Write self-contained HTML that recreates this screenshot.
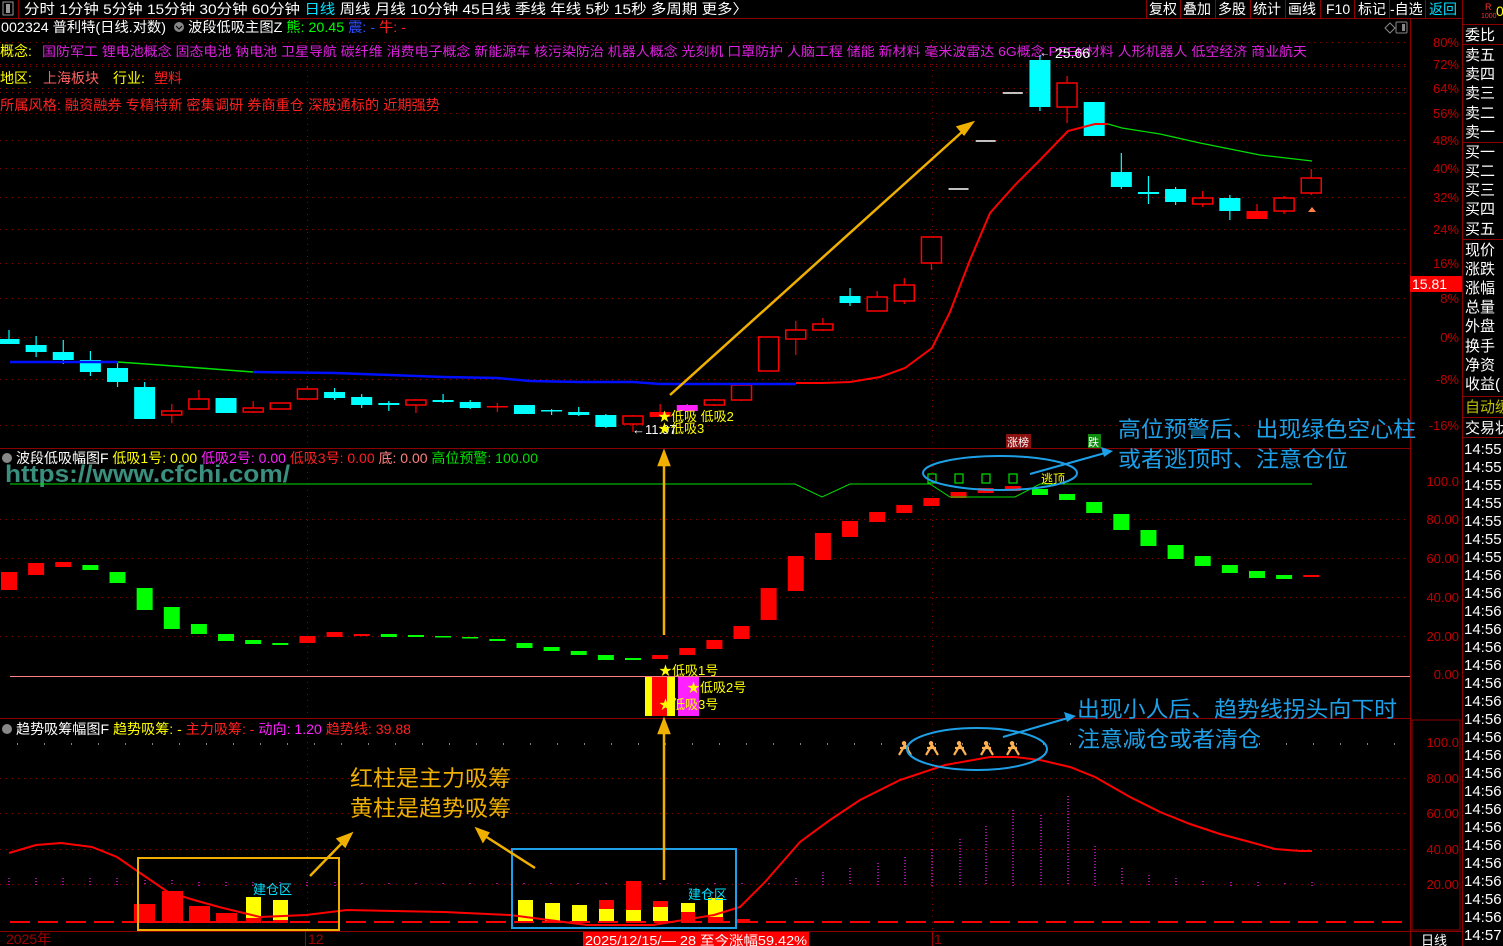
<!DOCTYPE html>
<html><head><meta charset="utf-8"><style>
html,body{margin:0;padding:0;background:#000;width:1503px;height:946px;overflow:hidden}
svg{display:block;font-family:"Liberation Sans","Noto Sans CJK SC",sans-serif}
</style></head><body>
<svg id="s" width="1503" height="946" viewBox="0 0 1503 946" xmlns="http://www.w3.org/2000/svg">
<rect width="1503" height="946" fill="#000"/>
<!-- toolbar -->
<line x1="0" y1="18.5" x2="1462" y2="18.5" stroke="#8b0000"/>
<rect x="3" y="2" width="10" height="13" fill="none" stroke="#999"/><rect x="6" y="4" width="4" height="9" fill="#999"/>
<line x1="18.5" y1="0" x2="18.5" y2="18" stroke="#8b0000"/>
<g font-size="14" fill="#fff">
<text x="24" y="14" textLength="724" lengthAdjust="spacingAndGlyphs">分时 1分钟 5分钟 15分钟 30分钟 60分钟 <tspan fill="#00e0ff">日线</tspan> 周线 月线 10分钟 45日线 季线 年线 5秒 15秒 多周期 更多〉</text>
<text x="1149" y="14">复权</text><text x="1183" y="14">叠加</text><text x="1218" y="14">多股</text><text x="1253" y="14">统计</text><text x="1288" y="14">画线</text><text x="1326" y="14">F10</text><text x="1358" y="14">标记</text><text x="1390" y="14">-自选</text><text x="1429" y="14" fill="#00e0ff">返回</text>
</g>
<g stroke="#8b0000"><line x1="1146.5" y1="0" x2="1146.5" y2="18"/><line x1="1180.5" y1="0" x2="1180.5" y2="18"/><line x1="1215.5" y1="0" x2="1215.5" y2="18"/><line x1="1250.5" y1="0" x2="1250.5" y2="18"/><line x1="1285.5" y1="0" x2="1285.5" y2="18"/><line x1="1320.5" y1="0" x2="1320.5" y2="18"/><line x1="1354.5" y1="0" x2="1354.5" y2="18"/><line x1="1389.5" y1="0" x2="1389.5" y2="18"/><line x1="1425.5" y1="0" x2="1425.5" y2="18"/></g>
<!-- frame lines -->
<g stroke="#8b0000" stroke-width="1">
<line x1="1410.5" y1="19" x2="1410.5" y2="946"/>
<line x1="1462.5" y1="0" x2="1462.5" y2="946"/>
<line x1="0" y1="448.5" x2="1410" y2="448.5"/>
<line x1="0" y1="718.5" x2="1410" y2="718.5"/>
<line x1="0" y1="931.5" x2="1462" y2="931.5"/>
</g>
<!-- header texts -->
<text x="1" y="32" font-size="14" fill="#fff" textLength="165" lengthAdjust="spacingAndGlyphs">002324 普利特(日线.对数)</text>
<circle cx="179" cy="27" r="5" fill="#888"/><path d="M176 26l3 3 3-3" stroke="#000" fill="none"/>
<text x="188" y="32" font-size="14" fill="#fff" textLength="218" lengthAdjust="spacingAndGlyphs">波段低吸主图Z <tspan fill="#00ff00">熊: 20.45</tspan> <tspan fill="#3050ff">震: -</tspan> <tspan fill="#ff2020">牛: -</tspan></text>
<text x="0" y="56" font-size="14" fill="#ffff00">概念:</text>
<text x="42" y="56" font-size="13" fill="#e020e0" textLength="1265" lengthAdjust="spacingAndGlyphs">国防军工 锂电池概念 固态电池 钠电池 卫星导航 碳纤维 消费电子概念 新能源车 核污染防治 机器人概念 光刻机 口罩防护 人脑工程 储能 新材料 毫米波雷达 6G概念 PEEK材料 人形机器人 低空经济 商业航天</text>
<text x="0" y="83" font-size="14" fill="#ffff00">地区:</text>
<text x="43" y="83" font-size="14" fill="#ff6060">上海板块</text>
<text x="113" y="83" font-size="14" fill="#ffff00">行业:</text>
<text x="154" y="83" font-size="14" fill="#ff2020">塑料</text>
<text x="0" y="110" font-size="14" fill="#ff2020" textLength="440" lengthAdjust="spacingAndGlyphs">所属风格: 融资融券 专精特新 密集调研 券商重仓 深股通标的 近期强势</text>
<path d="M1385 28l5-5 5 5-5 5z" fill="none" stroke="#888"/><rect x="1396" y="22" width="11" height="11" fill="none" stroke="#888" rx="1"/><rect x="1402" y="24" width="3" height="7" fill="#888"/>
<g id="grid" stroke="#8b0000" stroke-dasharray="1 5"></g>
<!-- price axis -->
<g font-size="13" fill="#c00000" text-anchor="end">
<text x="1459" y="47">80%</text><text x="1459" y="69">72%</text><text x="1459" y="93">64%</text><text x="1459" y="118">56%</text><text x="1459" y="145">48%</text><text x="1459" y="173">40%</text><text x="1459" y="202">32%</text><text x="1459" y="234">24%</text><text x="1459" y="268">16%</text><text x="1459" y="303">8%</text><text x="1459" y="342">0%</text><text x="1459" y="384">-8%</text><text x="1459" y="430">-16%</text>
<text x="1459" y="486">100.0</text><text x="1459" y="524">80.00</text><text x="1459" y="563">60.00</text><text x="1459" y="602">40.00</text><text x="1459" y="641">20.00</text><text x="1459" y="679">0.00</text>
<text x="1459" y="747">100.0</text><text x="1459" y="783">80.00</text><text x="1459" y="818">60.00</text><text x="1459" y="854">40.00</text><text x="1459" y="889">20.00</text>
</g>
<rect x="1410" y="276" width="52" height="16" fill="#ff0000"/>
<text x="1412" y="289" font-size="14" fill="#fff">15.81</text>
<rect x="1412" y="720" width="48" height="210" fill="none" stroke="#8b0000"/>
<!-- right panel -->
<g font-size="15" fill="#fff">
<text x="1465" y="40">委比</text>
<text x="1465" y="60">卖五</text><text x="1465" y="79">卖四</text><text x="1465" y="98">卖三</text><text x="1465" y="118">卖二</text><text x="1465" y="137">卖一</text>
<text x="1465" y="157">买一</text><text x="1465" y="176">买二</text><text x="1465" y="195">买三</text><text x="1465" y="214">买四</text><text x="1465" y="234">买五</text>
<text x="1465" y="255">现价</text><text x="1465" y="274">涨跌</text><text x="1465" y="293">涨幅</text><text x="1465" y="312">总量</text><text x="1465" y="331">外盘</text><text x="1465" y="351">换手</text><text x="1465" y="370">净资</text><text x="1465" y="389">收益(</text>
<text x="1465" y="412" fill="#c0c000">自动缓</text>
<text x="1465" y="433">交易状</text>
</g>
<g stroke="#8b0000"><line x1="1463" y1="24.5" x2="1503" y2="24.5"/><line x1="1463" y1="44.5" x2="1503" y2="44.5"/><line x1="1463" y1="142.5" x2="1503" y2="142.5"/><line x1="1463" y1="239.5" x2="1503" y2="239.5"/><line x1="1463" y1="396.5" x2="1503" y2="396.5"/><line x1="1463" y1="417.5" x2="1503" y2="417.5"/><line x1="1463" y1="437.5" x2="1503" y2="437.5"/></g>
<text x="1485" y="10" font-size="9" fill="#ff3030">R</text><text x="1481" y="18" font-size="7" fill="#ff3030">1000</text><text x="1496" y="16" font-size="14" fill="#ffff00">0</text>
<g id="times" font-size="15" fill="#fff">
<text x="1464" y="454">14:55</text><text x="1464" y="472">14:55</text><text x="1464" y="490">14:55</text><text x="1464" y="508">14:55</text><text x="1464" y="526">14:55</text><text x="1464" y="544">14:55</text><text x="1464" y="562">14:55</text><text x="1464" y="580">14:56</text><text x="1464" y="598">14:56</text><text x="1464" y="616">14:56</text><text x="1464" y="634">14:56</text><text x="1464" y="652">14:56</text><text x="1464" y="670">14:56</text><text x="1464" y="688">14:56</text><text x="1464" y="706">14:56</text><text x="1464" y="724">14:56</text><text x="1464" y="742">14:56</text><text x="1464" y="760">14:56</text><text x="1464" y="778">14:56</text><text x="1464" y="796">14:56</text><text x="1464" y="814">14:56</text><text x="1464" y="832">14:56</text><text x="1464" y="850">14:56</text><text x="1464" y="868">14:56</text><text x="1464" y="886">14:56</text><text x="1464" y="904">14:56</text><text x="1464" y="922">14:56</text><text x="1464" y="940">14:57</text>
</g>
<g id="shapes"></g>
<!-- main lines -->
<polyline points="10,362 118,362" stroke="#0010ff" stroke-width="2.5" fill="none"/>
<polyline points="118,362 160,365 200,368 253,372" stroke="#00e000" stroke-width="1.5" fill="none"/>
<polyline points="253,372 335,373 390,375 443,377 497,378 530,381 580,382 633,382 660,384 796,384" stroke="#0010ff" stroke-width="2.5" fill="none"/>
<polyline points="796,383 823,383 850,382 880,377 905,368 932,348 950,312 970,260 990,213 1015,185 1040,160 1068,131 1095,124 1108,124" stroke="#ff0000" stroke-width="2" fill="none"/>
<polyline points="1108,124 1122,128 1160,134 1200,143 1260,155 1312,161" stroke="#00e000" stroke-width="1.2" fill="none"/>
<text x="1055" y="58" font-size="14" fill="#fff">25.66</text><text x="1040" y="56" font-size="10" fill="#fff">←</text>
<path d="M1308 212l4-5 4 5z" fill="#ff8040"/>
<text x="632" y="434" font-size="13" fill="#fff">←11.97</text>
<text x="658" y="421" font-size="13" fill="#ffff00">★低吸  低吸2</text>
<text x="658" y="433" font-size="13" fill="#ffff00">★低吸3</text>
<!-- panel 2 -->
<text x="16" y="463" font-size="14" fill="#fff" textLength="522" lengthAdjust="spacingAndGlyphs">波段低吸幅图F <tspan fill="#ffff00">低吸1号: 0.00</tspan> <tspan fill="#ff20ff">低吸2号: 0.00</tspan> <tspan fill="#ff2020">低吸3号: 0.00</tspan> <tspan fill="#ff8080">底: 0.00</tspan> <tspan fill="#00e000">高位预警: 100.00</tspan></text>
<circle cx="7" cy="458" r="5" fill="#888"/>
<text x="5" y="482" font-size="24" font-weight="bold" fill="#3a8f7f" textLength="285" lengthAdjust="spacingAndGlyphs">https://www.cfchi.com/</text>
<polyline points="10,484 795,484 822,497 850,484 930,484 950,497 1015,497 1040,484 1312,484" stroke="#00e000" stroke-width="1" fill="none"/>
<line x1="10" y1="676.5" x2="1410" y2="676.5" stroke="#ff8080" stroke-width="1"/>
<rect x="645" y="677" width="7" height="39" fill="#ffff00"/><rect x="652" y="677" width="15" height="39" fill="#ff0000"/><rect x="667" y="677" width="8" height="39" fill="#ffff00"/><rect x="678" y="677" width="21" height="39" fill="#ff20ff"/>
<text x="659" y="675" font-size="13" fill="#ffff00">★低吸1号</text>
<text x="687" y="692" font-size="13" fill="#ffff00">★低吸2号</text>
<text x="659" y="709" font-size="13" fill="#ffff00">★低吸3号</text>
<g fill="none" stroke="#00e000" stroke-width="1.2"><rect x="928" y="474" width="8" height="9"/><rect x="955" y="474" width="8" height="9"/><rect x="982" y="474" width="8" height="9"/><rect x="1009" y="474" width="8" height="9"/></g>
<text x="1041" y="483" font-size="12" fill="#ffff00">逃顶</text>
<rect x="1006" y="434" width="25" height="14" fill="#8b1010"/><text x="1007" y="446" font-size="11" fill="#fff">涨榜</text>
<rect x="1088" y="434" width="13" height="14" fill="#108b10"/><text x="1088" y="446" font-size="11" fill="#fff">跌</text>
<ellipse cx="1000" cy="473" rx="77" ry="17" fill="none" stroke="#1ea0e8" stroke-width="2"/>
<line x1="1030" y1="474" x2="1105" y2="453" stroke="#1ea0e8" stroke-width="2"/><path d="M1113 451l-12-4 3 10z" fill="#1ea0e8"/>
<text x="1118" y="437" font-size="22" fill="#1ea0e8" textLength="298" lengthAdjust="spacingAndGlyphs">高位预警后、出现绿色空心柱</text>
<text x="1118" y="467" font-size="22" fill="#1ea0e8" textLength="230" lengthAdjust="spacingAndGlyphs">或者逃顶时、注意仓位</text>
<!-- panel 3 -->
<circle cx="7" cy="729" r="5" fill="#888"/>
<text x="16" y="734" font-size="14" fill="#fff" textLength="395" lengthAdjust="spacingAndGlyphs">趋势吸筹幅图F <tspan fill="#ffff00">趋势吸筹: -</tspan> <tspan fill="#ff2020">主力吸筹: -</tspan> <tspan fill="#ff20ff">动向: 1.20</tspan> <tspan fill="#ff2020">趋势线: 39.88</tspan></text>
<line x1="10" y1="922" x2="1410" y2="922" stroke="#ff0000" stroke-width="2" stroke-dasharray="20 8"/>
<polyline points="9,853 36,845 61,843 92,847 117,857 143,875 168,892 194,900 219,907 260,917 306,915 347,910 444,912 510,915 587,925 653,925 714,915 740,907 765,882 800,842 830,820 860,800 900,780 945,765 990,757 1015,757 1040,760 1070,767 1095,777 1130,797 1160,812 1190,824 1220,834 1250,842 1275,849 1300,851 1312,851" stroke="#ff0000" stroke-width="2" fill="none"/>
<rect x="138" y="858" width="201" height="72" fill="none" stroke="#f0b000" stroke-width="2"/>
<rect x="512" y="849" width="224" height="79" fill="none" stroke="#1ea0e8" stroke-width="2"/>
<text x="253" y="894" font-size="13" fill="#00e0ff">建仓区</text>
<text x="688" y="899" font-size="13" fill="#00e0ff">建仓区</text>
<text x="350" y="786" font-size="22" fill="#f0b000" textLength="161" lengthAdjust="spacingAndGlyphs">红柱是主力吸筹</text>
<text x="350" y="816" font-size="22" fill="#f0b000" textLength="161" lengthAdjust="spacingAndGlyphs">黄柱是趋势吸筹</text>
<ellipse cx="977" cy="749" rx="70" ry="21" fill="none" stroke="#1ea0e8" stroke-width="2"/>
<line x1="1003" y1="737" x2="1068" y2="718" stroke="#1ea0e8" stroke-width="2"/><path d="M1076 716l-12-4 3 10z" fill="#1ea0e8"/>
<text x="1077" y="717" font-size="22" fill="#1ea0e8" textLength="320" lengthAdjust="spacingAndGlyphs">出现小人后、趋势线拐头向下时</text>
<text x="1077" y="747" font-size="22" fill="#1ea0e8" textLength="184" lengthAdjust="spacingAndGlyphs">注意减仓或者清仓</text>
<!-- arrows -->
<g stroke="#f0b000" stroke-width="2.5" fill="#f0b000">
<line x1="670" y1="395" x2="962" y2="132"/><path d="M972 123l-14 4 6 7z"/>
<line x1="664" y1="635" x2="664" y2="464"/><path d="M664 452l-5 13h10z"/>
<line x1="664" y1="880" x2="664" y2="732"/><path d="M664 720l-5 13h10z"/>
<line x1="310" y1="876" x2="343" y2="842"/><path d="M351 834l-13 5 7 7z"/>
<line x1="535" y1="868" x2="485" y2="836"/><path d="M477 829l6 12 5-8z"/>
</g>
<!-- bottom axis -->
<text x="6" y="944" font-size="14" fill="#a00000">2025年</text>
<line x1="305.5" y1="932" x2="305.5" y2="946" stroke="#a00000"/><text x="308" y="944" font-size="14" fill="#a00000">12</text>
<line x1="932.5" y1="932" x2="932.5" y2="946" stroke="#a00000"/><text x="934" y="944" font-size="14" fill="#a00000">1</text>
<rect x="583" y="932" width="226" height="14" fill="#ff0000"/>
<text x="585" y="945" font-size="13" fill="#fff" textLength="222" lengthAdjust="spacingAndGlyphs">2025/12/15/— 28 至今涨幅59.42%</text>
<text x="1421" y="945" font-size="13" fill="#fff">日线</text>
</svg>
<script>
(function(){
var NS="http://www.w3.org/2000/svg",g=document.getElementById('shapes'),gr=document.getElementById('grid');
function el(t,a,p){var e=document.createElementNS(NS,t);for(var k in a)e.setAttribute(k,a[k]);(p||g).appendChild(e);return e;}
[42,64,88,113,140,168,197,229,263,298,337,379,425].forEach(function(y){el('line',{x1:0,y1:y+.5,x2:1410,y2:y+.5},gr);});
el('line',{x1:0,y1:66.5,x2:1410,y2:66.5},gr);el('line',{x1:0,y1:92.5,x2:1410,y2:92.5},gr);
[519,558,597,636].forEach(function(y){el('line',{x1:0,y1:y+.5,x2:1410,y2:y+.5},gr);});
[778,813,849,884].forEach(function(y){el('line',{x1:0,y1:y+.5,x2:1410,y2:y+.5},gr);});
el('line',{x1:307.5,y1:40,x2:307.5,y2:931},gr);el('line',{x1:932.5,y1:40,x2:932.5,y2:931},gr);
el('line',{x1:0,y1:744,x2:1410,y2:744,stroke:'#fff','stroke-dasharray':'1 26','stroke-dashoffset':'-17'},gr);
for(var t=450;t<931;t+=9.6){el('line',{x1:1410,y1:t,x2:1414,y2:t},gr).setAttribute('stroke-dasharray','');}
function X(i){return 9+27.13*i;}
var C=[['c',339,344,330,344],['c',345,352,336,357],['c',352,360,340,364],['c',360,372,351,376],['c',368,382,362,387],['c',387,419,382,419],['r',411,415,404,423],['r',399,409,390,410],['c',398,413,398,413],['r',408,412,401,413],['r',403,409,403,409],['r',389,399,386,399],['c',392,398,388,400],['c',397,405,394,408],['c',403,405,401,411],['r',400,405,399,413],['c',400,402,394,403],['c',402,408,400,409],['R',406,407,403,412],['c',405,414,405,414],['c',410,411,409,415],['c',412,415,407,416],['c',415,427,414,428],['r',416,424,415,432],['R',412,417,404,417],['M',405,411,404,411],['r',400,405,399,406],['r',385,400,384,401],['r',337,371,337,371],['r',330,339,321,355],['r',324,330,318,331],['c',296,303,288,306],['r',297,311,291,311],['r',285,301,278,304],['r',237,263,237,270],['w',189],['w',141],['w',93],['c',60,107,55,111],['r',83,107,76,123],['c',102,136,102,136],['c',172,187,153,189],['c',192,194,176,204],['c',189,202,187,205],['r',198,204,191,207],['c',198,211,195,220],['R',211,219,204,219],['r',198,211,196,214],['r',178,193,169,195]];
C.forEach(function(d,i){var x=X(i),t=d[0];
 if(t=='w'){el('line',{x1:x-10,y1:d[1],x2:x+10,y2:d[1],stroke:'#fff','stroke-width':1.5});return;}
 var col=t=='c'?'#00ffff':t=='M'?'#ff20ff':'#ff0000';
 el('line',{x1:x,y1:d[3],x2:x,y2:d[4],stroke:col,'stroke-width':1.2});
 if(t=='r')el('rect',{x:x-10,y:d[1],width:20,height:Math.max(1,d[2]-d[1]),fill:'#000',stroke:col,'stroke-width':1.5});
 else el('rect',{x:x-10.5,y:d[1],width:21,height:Math.max(1.5,d[2]-d[1]),fill:col});
});
var B=[['r',572,590],['r',563,575],['r',562,567],['g',565,570],['g',572,583],['g',588,610],['g',607,629],['g',624,634],['g',634,641],['g',640,644],['g',643,645],['r',636,643],['r',632,637],['r',634,636],['g',634,637],['g',635,637],['g',636,637],['g',637,638],['g',639,641],['g',643,648],['g',647,651],['g',651,655],['g',655,660],['g',658,660],['r',655,659],['r',648,655],['r',640,649],['r',626,639],['r',588,620],['r',556,591],['r',533,560],['r',521,537],['r',512,522],['r',505,513],['r',498,506],['r',492,498],['r',488,493],['r',486,491],['g',489,495],['g',494,500],['g',502,513],['g',514,530],['g',530,546],['g',545,559],['g',556,566],['g',565,573],['g',571,578],['g',575,579],['r',575,577]];
B.forEach(function(d,i){var x=X(i);el('rect',{x:x-8,y:d[1],width:16,height:Math.max(1.5,d[2]-d[1]),fill:d[0]=='r'?'#ff0000':'#00ff00'});});
var Mg=[[9,878],[36,878],[63,878],[90,878],[117,878],[145,880],[172,880],[199,882],[226,882],[253,882],[280,882],[307,882],[335,882],[362,883],[389,883],[416,883],[443,883],[470,883],[497,883],[524,883],[551,883],[578,883],[606,883],[633,883],[660,883],[688,883],[715,883],[742,883],[769,883],[796,878],[823,872],[850,868],[878,863],[905,857],[932,849],[960,839],[986,826],[1013,810],[1041,815],[1068,796],[1095,846],[1122,868],[1149,875],[1176,878],[1203,881],[1231,882],[1258,882],[1285,883],[1312,882]];
Mg.forEach(function(d){el('line',{x1:d[0],y1:d[1],x2:d[0],y2:886,stroke:'#ff20ff','stroke-width':1.2,'stroke-dasharray':'1 2'});});
var P=[[134,155,0,0,904],[162,183,0,0,891],[189,210,0,0,906],[216,237,0,0,913],[246,261,897,918,918],[273,288,900,920,920],[518,533,900,921,921],[545,560,903,921,921],[572,587,905,921,921],[599,614,909,921,900],[626,641,910,921,881],[653,668,907,921,901],[681,695,903,912,912],[708,723,898,917,917],[737,750,0,0,919]];
P.forEach(function(d){
 if(d[2]){el('rect',{x:d[0],y:d[2],width:d[1]-d[0],height:d[3]-d[2],fill:'#ffff00'});}
 if(d[4]<d[2]){el('rect',{x:d[0],y:d[4],width:d[1]-d[0],height:d[2]-d[4],fill:'#ff0000'});}
 else if(d[4]<923){el('rect',{x:d[0],y:d[4],width:d[1]-d[0],height:923-d[4],fill:'#ff0000'});}
});
[905,932,960,987,1013].forEach(function(x){
 el('path',{d:'M'+(x-1)+' 741a2.2 2.2 0 1 0 .1 0',fill:'#ffb050'});
 el('path',{d:'M'+(x)+' 745l-6 10M'+(x)+' 745l6 10M'+(x-5)+' 748h9',stroke:'#ffb050','stroke-width':2.2,fill:'none'});
});
})();
</script>
</body></html>
